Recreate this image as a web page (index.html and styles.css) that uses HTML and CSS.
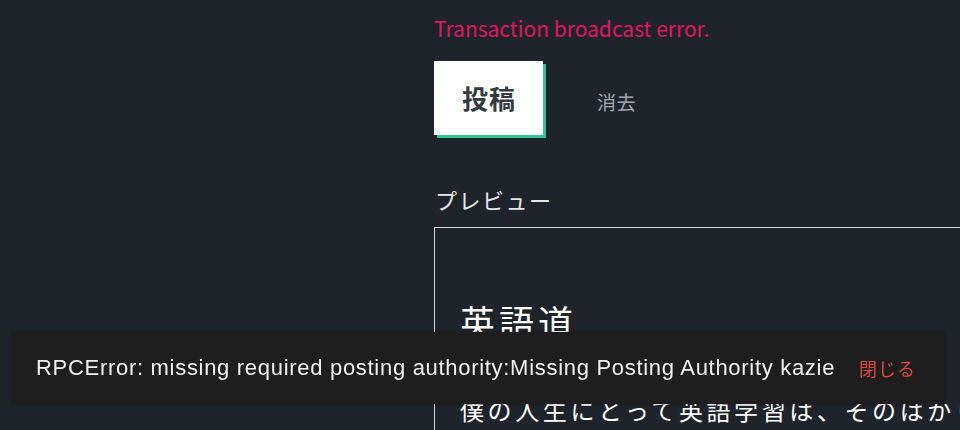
FILE: index.html
```html
<!DOCTYPE html>
<html lang="ja">
<head>
<meta charset="utf-8">
<link rel="stylesheet" href="styles.css">
</head>
<body>
<div class="page">
  <div class="side"></div>
  <main class="main">
    <p class="error">Transaction broadcast error.</p>
    <div class="actions">
      <button class="btn-post">投稿</button>
      <button class="btn-clear">消去</button>
    </div>
    <h3 class="preview-label">プレビュー</h3>
    <div class="preview">
      <h1 class="preview-title">英語道</h1>
      <p class="preview-text">僕の人生にとって英語学習は、そのはかりしれない価値を持つものでした。</p>
    </div>
  </main>
</div>
<div class="toast">
  <span class="toast-msg">RPCError: missing required posting authority:Missing Posting Authority kazie</span>
  <button class="toast-close">閉じる</button>
</div>
</body>
</html>
```
FILE: styles.css
```css
html, body {
  margin: 0;
  padding: 0;
  background: #1f242a;
  height: 100%;
  overflow: hidden;
}
body {
  font-family: "Noto Sans CJK JP", "Noto Sans", sans-serif;
  color: #e6e6e6;
}
.page {
  display: grid;
  grid-template-columns: 434px 1fr;
  height: 430px;
  overflow: hidden;
}
.main {
  padding-top: 14px;
  min-width: 0;
  overflow: hidden;
}
.error {
  margin: 0;
  font-size: 21px;
  line-height: 28px;
  color: #e0175f;
}
.actions {
  display: flex;
  align-items: center;
  margin-top: 19px;
}
.btn-post {
  width: 109px;
  height: 74px;
  border: none;
  background: #fff;
  box-shadow: 3px 3px 0 #2fc597;
  font-family: inherit;
  font-size: 26px;
  letter-spacing: 1px;
  font-weight: bold;
  color: #333a40;
  padding: 0 0 2px 1px;
}
.btn-clear {
  margin-left: 54px;
  border: none;
  background: none;
  padding: 6px 0 0;
  font-family: inherit;
  font-size: 19px;
  letter-spacing: 0.5px;
  color: #a3a9ad;
}
.preview-label {
  margin: 49px 0 0 1px;
  font-size: 22px;
  letter-spacing: 1.5px;
  font-weight: normal;
  line-height: 30px;
  color: #e8e8e8;
}
.preview {
  margin-top: 13px;
  border: 1px solid #d8d8d8;
  border-right: none;
  padding: 70px 0 0 25px;
  height: 400px;
}
.preview-title {
  margin: 0;
  font-size: 35px;
  letter-spacing: 4px;
  line-height: 46px;
  font-weight: normal;
  color: #fff;
}
.preview-text {
  margin: 48px 0 0;
  font-size: 24px;
  letter-spacing: 3.6px;
  white-space: nowrap;
  color: #fff;
}
.toast {
  position: fixed;
  left: 12px;
  right: 15px;
  top: 332px;
  height: 72px;
  background: #1e1e1e;
  display: flex;
  align-items: center;
  justify-content: space-between;
  padding: 0 29px 0 24px;
  box-sizing: border-box;
  box-shadow: 0 0 4px rgba(0,0,0,0.3);
}
.toast-msg {
  font-family: "Liberation Sans", Arial, sans-serif;
  font-size: 22px;
  letter-spacing: 0.7px;
  color: #f0f0f0;
  white-space: nowrap;
}
.toast-close {
  border: none;
  background: none;
  padding: 0;
  font-family: "Noto Sans CJK JP", sans-serif;
  font-size: 18px;
  letter-spacing: 1px;
  color: #e0483c;
}
```
